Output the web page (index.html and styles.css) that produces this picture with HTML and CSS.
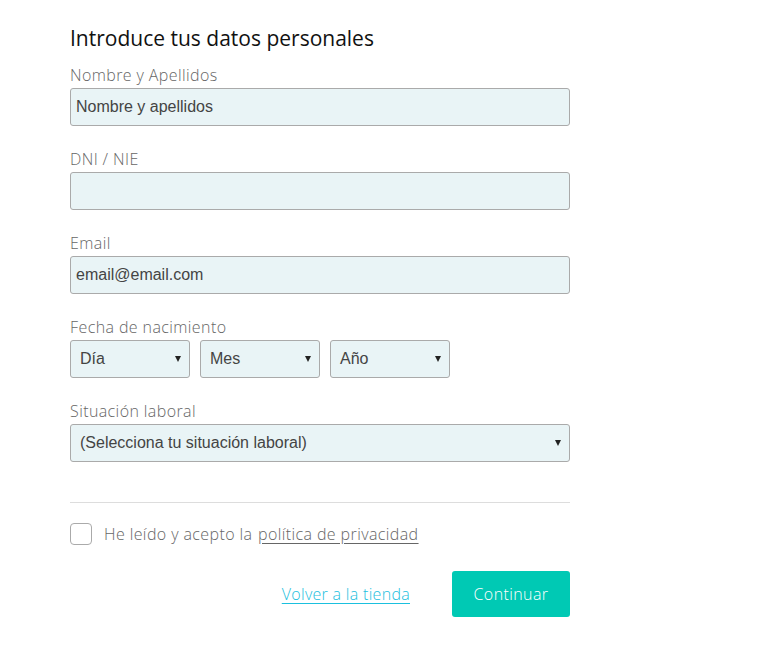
FILE: index.html
```html
<!DOCTYPE html>
<html lang="es">
<head>
<meta charset="utf-8">
<title>Datos personales</title>
<link rel="stylesheet" href="styles.css">
</head>
<body>
<form class="form">
  <h2 class="title">Introduce tus datos personales</h2>
  <div class="group">
    <label class="label">Nombre y Apellidos</label>
    <div class="input">Nombre y apellidos</div>
  </div>
  <div class="group">
    <label class="label">DNI / NIE</label>
    <div class="input"></div>
  </div>
  <div class="group">
    <label class="label">Email</label>
    <div class="input">email@email.com</div>
  </div>
  <div class="group">
    <label class="label">Fecha de nacimiento</label>
    <div class="date-row">
      <div class="select small"><span>Día</span><span class="caret"></span></div>
      <div class="select small"><span>Mes</span><span class="caret"></span></div>
      <div class="select small"><span>Año</span><span class="caret"></span></div>
    </div>
  </div>
  <div class="group">
    <label class="label">Situación laboral</label>
    <div class="select"><span>(Selecciona tu situación laboral)</span><span class="caret"></span></div>
  </div>
  <hr class="divider">
  <div class="check-row">
    <span class="checkbox"></span>
    <span class="check-text">He leído y acepto la <a class="policy" href="#">política de privacidad</a></span>
  </div>
  <div class="actions">
    <a class="back" href="#">Volver a la tienda</a>
    <button type="button" class="btn">Continuar</button>
  </div>
</form>
</body>
</html>
```
FILE: styles.css
```css
html, body {
  margin: 0;
  padding: 0;
  background: #fff;
}
.form {
  width: 500px;
  margin-left: 70px;
  padding-top: 24px;
  font-family: "Open Sans", "Noto Sans", sans-serif;
}
.title {
  margin: 0 0 12px;
  font-size: 21px;
  font-weight: 500;
  color: #111;
  line-height: 28px;
}
.group {
  margin-bottom: 22px;
}
.label {
  display: block;
  font-size: 16px;
  font-weight: 300;
  color: #666;
  line-height: 22px;
  margin-bottom: 2px;
  letter-spacing: 0.4px;
}
.input, .select {
  box-sizing: border-box;
  height: 38px;
  border: 1px solid #aaa;
  border-radius: 3px;
  background: #e9f4f6;
  font-family: "Liberation Sans", Arial, sans-serif;
  font-size: 16px;
  color: #444;
  line-height: 36px;
  padding: 0 5px;
}
.select {
  display: flex;
  justify-content: space-between;
  align-items: center;
  padding: 0 8px 0 9px;
}
.select.small {
  width: 120px;
}
.date-row {
  display: flex;
  gap: 10px;
}
.caret {
  width: 0;
  height: 0;
  border-left: 3px solid transparent;
  border-right: 3px solid transparent;
  border-top: 6px solid #222;
}
.divider {
  border: 0;
  border-top: 1px solid #ddd;
  margin: 40px 0 19px;
}
.check-row {
  display: flex;
  align-items: center;
  gap: 12px;
  height: 24px;
}
.checkbox {
  box-sizing: border-box;
  width: 22px;
  height: 22px;
  border: 1px solid #aaa;
  border-radius: 4px;
  background: #fff;
}
.check-text {
  font-size: 16px;
  font-weight: 300;
  color: #666;
  letter-spacing: 0.4px;
}
.policy {
  color: #666;
  margin-left: 1px;
  text-decoration: underline;
  text-underline-offset: 3px;
}
.actions {
  display: flex;
  justify-content: flex-end;
  align-items: center;
  gap: 42px;
  margin-top: 25px;
}
.back {
  font-size: 16px;
  font-weight: 300;
  color: #1bc0de;
  text-decoration: underline;
  text-underline-offset: 3px;
  letter-spacing: 0.3px;
}
.btn {
  width: 118px;
  height: 46px;
  border: 0;
  border-radius: 3px;
  background: #00c9b4;
  color: #fff;
  font-family: "Open Sans", "Noto Sans", sans-serif;
  font-size: 16px;
  font-weight: 300;
  letter-spacing: 0.4px;
}
```
